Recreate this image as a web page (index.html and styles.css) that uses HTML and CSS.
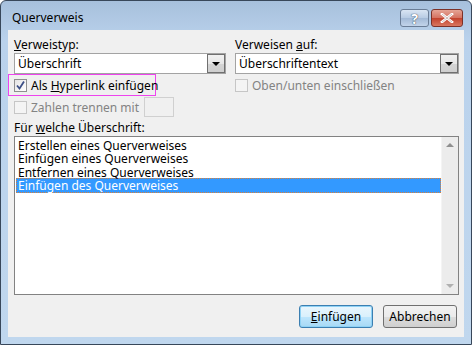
FILE: index.html
```html
<!DOCTYPE html>
<html lang="de">
<head>
  <meta charset="UTF-8">
  <title>Querverweis</title>
  <link rel="stylesheet" href="styles.css">
</head>
<body>
  <div class="window">
    <div class="titlebar">
      <span class="title">Querverweis</span>
      <div class="caption-buttons">
        <div class="cap-btn help">?</div>
        <div class="cap-btn close">
          <svg width="14" height="10" viewBox="0 0 14 10"><path d="M2 1 L12 9 M12 1 L2 9" stroke="#fff" stroke-width="2.6" stroke-linecap="square"/><path d="M2 1 L12 9 M12 1 L2 9" stroke="#5a2a22" stroke-width="0.6" fill="none" opacity="0.5"/></svg>
        </div>
      </div>
    </div>

    <div class="client">
      <div class="columns">
        <div class="col">
          <div class="label"><u>V</u>erweistyp:</div>
          <div class="combo">
            <span class="combo-text">Überschrift</span>
            <span class="combo-btn"><span class="arrow"></span></span>
          </div>
          <div class="check-row highlight">
            <span class="checkbox checked">
              <svg width="11" height="11" viewBox="0 0 11 11"><path d="M2 5.5 L4.5 8.5 L9 1.5" stroke="#3c4f86" stroke-width="1.8" fill="none"/></svg>
            </span>
            <span>Als <u>H</u>yperlink einfügen</span>
          </div>
          <div class="check-row disabled">
            <span class="checkbox"></span>
            <span>Zahlen trennen mit</span>
            <span class="small-input"></span>
          </div>
        </div>
        <div class="col">
          <div class="label">Verweisen <u>a</u>uf:</div>
          <div class="combo">
            <span class="combo-text">Überschriftentext</span>
            <span class="combo-btn"><span class="arrow"></span></span>
          </div>
          <div class="check-row disabled">
            <span class="checkbox"></span>
            <span>Oben/unten einschließen</span>
          </div>
        </div>
      </div>

      <div class="label list-label">Für <u>w</u>elche Überschrift:</div>
      <div class="listbox">
        <div class="items">
          <div class="item">Erstellen eines Querverweises</div>
          <div class="item">Einfügen eines Querverweises</div>
          <div class="item">Entfernen eines Querverweises</div>
          <div class="item selected">Einfügen des Querverweises</div>
        </div>
        <div class="scrollbar">
          <span class="sb-up"></span>
          <span class="sb-down"></span>
        </div>
      </div>

      <div class="buttons">
        <button class="btn default"><u>E</u>infügen</button>
        <button class="btn">Abbrechen</button>
      </div>
    </div>
  </div>
</body>
</html>
```

FILE: styles.css
```css
* {
  box-sizing: border-box;
}
body {
  margin: 0;
  padding: 0;
  background: #ffffff;
  font-family: "Noto Sans", "Open Sans", sans-serif;
  font-size: 12px;
  color: #000;
}
.window {
  width: 472px;
  height: 345px;
  border: 1px solid #38475a;
  border-radius: 6px 6px 0 0;
  background: linear-gradient(#a7c0dc, #bad2ec 40px, #c0d7ee);
  display: flex;
  flex-direction: column;
  overflow: hidden;
}
.titlebar {
  height: 29px;
  flex: none;
  display: flex;
  align-items: flex-start;
  justify-content: space-between;
  padding: 0 8px 0 11px;
}
.title {
  margin-top: 8px;
  font-size: 12px;
}
.caption-buttons {
  display: flex;
  gap: 2px;
  margin-top: 8px;
}
.cap-btn {
  height: 18px;
  border: 1px solid #6a7d96;
  border-radius: 3px;
  display: flex;
  align-items: center;
  justify-content: center;
}
.help {
  width: 29px;
  background: linear-gradient(#d9e5f3, #b7cbe3 50%, #a2b9d6 51%, #c2d4ea);
  color: #fff;
  font-weight: bold;
  font-size: 14px;
  text-shadow: 0 0 1px #33475e, 0 0 1px #33475e;
}
.close {
  width: 32px;
  border-color: #7d3127;
  background: linear-gradient(#e5a495, #d47160 50%, #c2412c 51%, #d9775f);
}
.client {
  flex: 1;
  margin: 0 7px 7px 7px;
  background: #f0f0f0;
  padding: 6px 5px 0 6px;
  display: flex;
  flex-direction: column;
}
.columns {
  display: grid;
  grid-template-columns: 212px 224px;
  column-gap: 9px;
}
.label {
  height: 17px;
  line-height: 17px;
  white-space: nowrap;
}
.combo {
  height: 21px;
  border: 1px solid #a3a3a3;
  background: #fff;
  display: flex;
  align-items: center;
  justify-content: space-between;
}
.combo-text {
  padding-left: 3px;
}
.combo-btn {
  width: 18px;
  height: 19px;
  border: 1px solid #707070;
  background: linear-gradient(#f2f2f2, #e6e6e6 50%, #d4d4d4 51%, #cfcfcf);
  display: flex;
  align-items: center;
  justify-content: center;
}
.arrow {
  width: 0;
  height: 0;
  border-left: 4px solid transparent;
  border-right: 4px solid transparent;
  border-top: 4px solid #000;
}
.check-row {
  height: 22px;
  display: flex;
  align-items: center;
  gap: 4px;
  white-space: nowrap;
}
.highlight {
  width: 148px;
  margin-left: -6px;
  padding-left: 5px;
  border: 1px solid #ee44ee;
}
.checkbox {
  width: 13px;
  height: 13px;
  flex: none;
  border: 1px solid #8e8f8f;
  background: linear-gradient(135deg, #dcdcdc, #fafafa);
  display: flex;
  align-items: center;
  justify-content: center;
}
.checked {
  background: linear-gradient(135deg, #e4e4e4, #ffffff);
}
.disabled {
  color: #838383;
}
.disabled .checkbox {
  border-color: #c6c6c6;
  background: #f4f4f4;
}
.small-input {
  width: 30px;
  height: 20px;
  border: 1px solid #d0d0d0;
  background: #f0f0f0;
  margin-left: 1px;
}
.list-label {
  margin-top: 1px;
}
.listbox {
  height: 159px;
  border: 1px solid #828282;
  background: #fff;
  display: flex;
}
.items {
  flex: 1;
  padding: 2px 0 0 1px;
}
.item {
  height: 13.3px;
  line-height: 13px;
  padding-left: 2px;
  white-space: nowrap;
}
.selected {
  height: 15px;
  margin-top: -1px;
  background: #3399ff;
  color: #fff;
  border: 1px dotted #d8803a;
  padding-left: 1px;
  line-height: 13px;
}
.scrollbar {
  width: 17px;
  background: #ececec;
  border-left: 1px solid #f4f4f4;
  display: flex;
  flex-direction: column;
  justify-content: space-between;
  align-items: center;
  padding: 6px 0;
}
.sb-up, .sb-down {
  width: 0;
  height: 0;
  border-left: 4px solid transparent;
  border-right: 4px solid transparent;
}
.sb-up {
  border-bottom: 4px solid #8f8f8f;
}
.sb-down {
  border-top: 4px solid #b0b0b0;
}
.buttons {
  display: flex;
  justify-content: flex-end;
  gap: 10px;
  margin-top: 10px;
  padding-right: 2px;
}
.btn {
  width: 74px;
  height: 23px;
  font-family: inherit;
  font-size: 12px;
  color: #000;
  border: 1px solid #707070;
  border-radius: 3px;
  background: linear-gradient(#f2f2f2, #ebebeb 50%, #dddddd 51%, #cfcfcf);
  padding: 0;
}
.btn.default {
  border-color: #3c7fb1;
  box-shadow: inset 0 0 0 1px #8fd2f5;
  background: linear-gradient(#eaf6fd, #d9f0fc 50%, #bee6fd 51%, #a7d9f5);
}
```
